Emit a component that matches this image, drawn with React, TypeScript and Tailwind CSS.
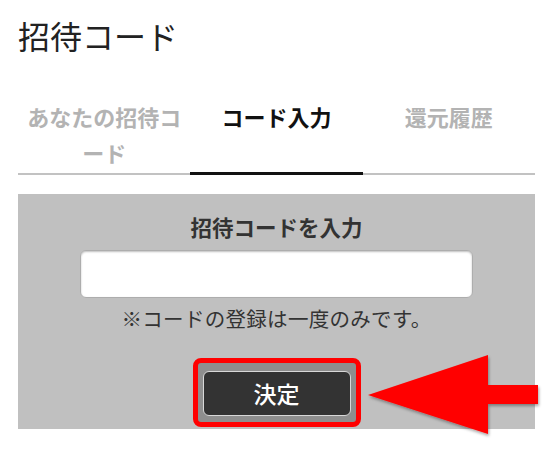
import React from 'react';

const tabs = [
  { label: 'あなたの招待コード', active: false },
  { label: 'コード入力', active: true },
  { label: '還元履歴', active: false },
];

const App = () => {
  return (
    <div
      className="relative w-[553px] h-[470px] bg-white overflow-hidden"
      style={{ fontFamily: '"Noto Sans CJK JP", "Noto Sans", sans-serif' }}
    >
      {/* Title */}
      <h1 className="ml-[18px] pt-[19px] text-[32px] leading-[32px] text-[#222]">招待コード</h1>

      {/* Tabs */}
      <div className="mx-[18px] mt-[47px] grid grid-cols-3">
        {tabs.map((tab) => (
          <div
            key={tab.label}
            className={`px-2 pb-[2px] text-center text-[22px] leading-[36px] font-bold ${
              tab.active
                ? 'text-[#111] border-b-[3px] border-[#111]'
                : 'text-[#b3b3b3] border-b-2 border-[#c2c2c2] pb-[3px]'
            }`}
          >
            {tab.label}
          </div>
        ))}
      </div>

      {/* Code input panel */}
      <div className="mx-[18px] mt-[19px] bg-[#c0c0c0] flex flex-col items-center pt-[19px] pb-[2px]">
        <div className="text-[21.5px] leading-[28px] font-bold text-[#333]">招待コードを入力</div>
        <input
          type="text"
          className="mt-[9px] w-[393px] h-[48px] bg-white rounded-md border border-[#adadad] shadow-[inset_0_1px_2px_rgba(0,0,0,0.25)] outline-none px-3 text-[18px]"
        />
        <div className="mt-[6px] text-[20.5px] leading-[28px] tracking-[0.3px] text-[#333]">※コードの登録は一度のみです。</div>
        <div className="mt-[26px] rounded-lg border-[5px] border-[#ff0000] bg-[#8e8e8e] px-[5px] pt-[8px] pb-[6px]">
          <button className="w-[148px] h-[45px] rounded-md bg-[#333] border border-[#d8d8d8] text-white text-[23px] leading-none font-medium">
            決定
          </button>
        </div>
      </div>

      {/* Arrow overlay */}
      <svg
        className="absolute left-[360px] top-[348px]"
        width="186"
        height="94"
        viewBox="360 348 186 94"
      >
        <defs>
          <filter id="arrowShadow" x="-10%" y="-10%" width="120%" height="130%">
            <feDropShadow dx="1" dy="2" stdDeviation="1.5" floodColor="#000" floodOpacity="0.35" />
          </filter>
        </defs>
        <polygon
          points="368,395 488,355 488,385 538,385 538,404 488,404 488,434"
          fill="#ff0000"
          filter="url(#arrowShadow)"
        />
      </svg>
    </div>
  );
};

export default App;
